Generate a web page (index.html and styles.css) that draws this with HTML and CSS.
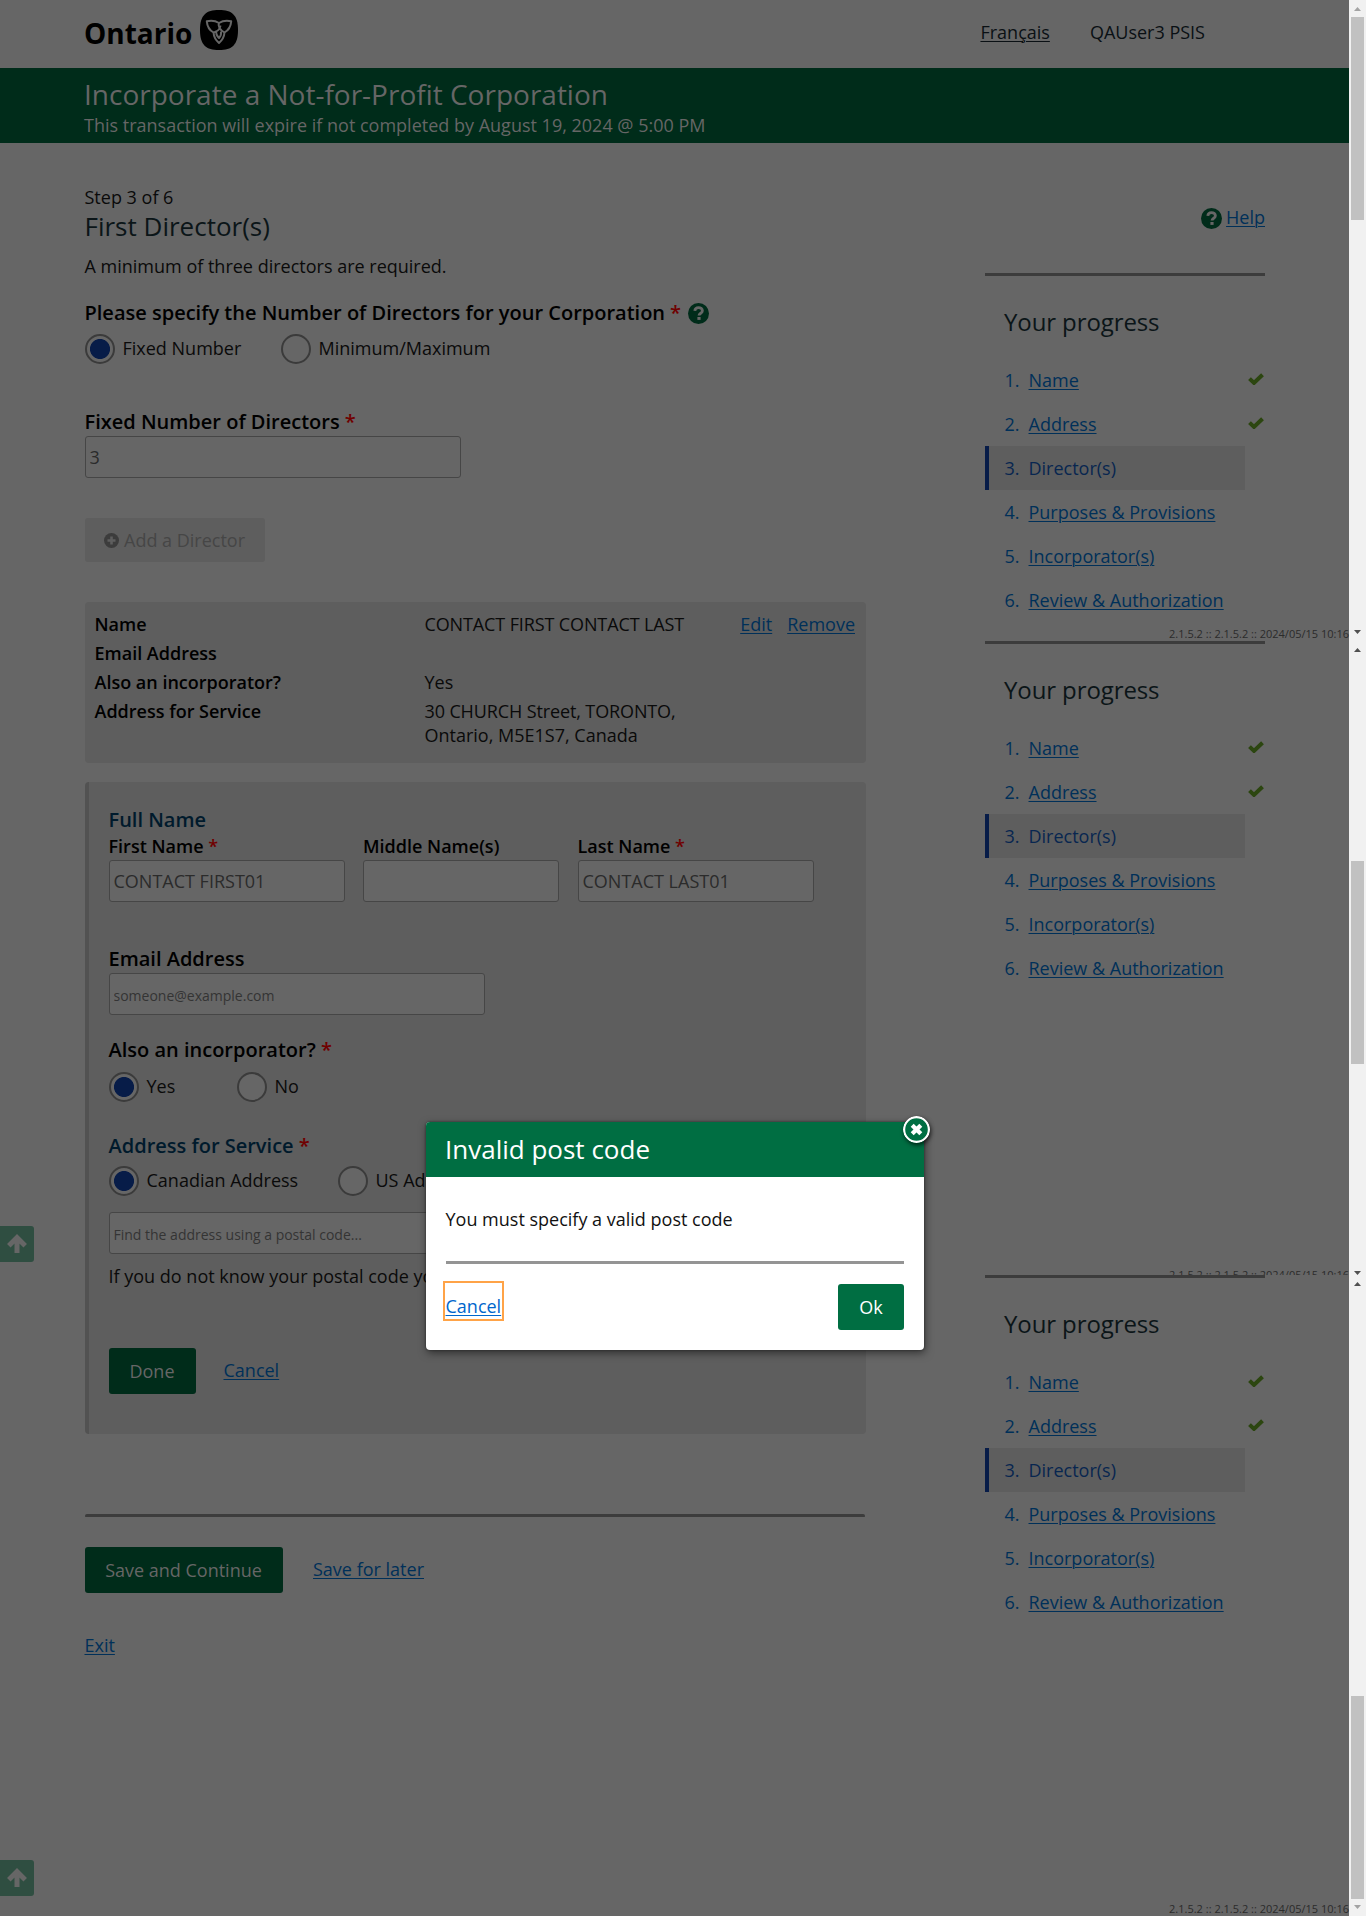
FILE: index.html
```html
<!DOCTYPE html>
<html lang="en">
<head>
<meta charset="utf-8">
<title>Incorporate a Not-for-Profit Corporation</title>
<link rel="stylesheet" href="styles.css">
</head>
<body>
<svg class="defs" width="0" height="0">
  <symbol id="help" viewBox="0 0 21 21"><circle cx="10.5" cy="10.5" r="10.5" fill="#002c1a"/><path d="M6.8 7.9C7 5.500 8.600 4.600 10.600 4.600s3.800 1.100 3.800 3.100c0 2.600-3.400 2.500-3.400 4.900" fill="none" stroke="#666" stroke-width="2.800"/><rect x="9.400" y="14" width="3.200" height="2.900" fill="#666"/></symbol>
  <symbol id="check" viewBox="0 0 16 12"><path d="M1.500 5.600 6 9.900 14.500 1.700" fill="none" stroke="#2c4610" stroke-width="4"/></symbol>
  <symbol id="up" viewBox="0 0 20 20"><path d="M10 19V4M1.800 11.800 10 3.600 18.200 11.800" fill="none" stroke="#666" stroke-width="5"/></symbol>
</svg>
<div class="app">
  <div class="page">
    <header class="header">
      <div class="logo"><span class="logo-text">Ontario</span>
        <svg class="badge" viewBox="0 0 38 40"><path d="M19 0C32 0 38 5 38 20S32 40 19 40 0 35 0 20 6 0 19 0Z" fill="#000"/><g fill="none" stroke="#666" stroke-width="2" stroke-linejoin="round"><path d="M19 13C15 10.500 11 10.300 6.800 11.300c.4 5 2.500 8.700 6.700 11.200.3 4 2 7.500 5.500 10.500 3.500-3 5.200-6.500 5.500-10.500 4.200-2.500 6.300-6.200 6.700-11.200-4.200-1-8.200-.8-12.200 1.700Z"/><path d="M13.500 22.500C17 22 20 19 20.500 15.500M19 13c-1.500 3 1 7 5.500 9.500M16.500 20.500c-1 3 .5 5.500 2.500 7.500 1.500-1.500 2.500-3.500 2-6.500"/></g></svg>
      </div>
      <nav class="topnav"><a class="lang" href="#">Français</a><span>QAUser3 PSIS</span></nav>
    </header>
    <div class="band"><h1>Incorporate a Not-for-Profit Corporation</h1><p>This transaction will expire if not completed by August 19, 2024 @ 5:00 PM</p></div>
    <div class="columns">
      <main class="main">
        <p class="step">Step 3 of 6</p>
        <h2>First Director(s)</h2>
        <p class="intro">A minimum of three directors are required.</p>
        <div class="label number-label">Please specify the Number of Directors for your Corporation <i>*</i><svg class="help-icon"><use href="#help"/></svg></div>
        <div class="radios first-radios"><span class="radio on"></span><label class="r-fixed">Fixed Number</label><span class="radio"></span><label>Minimum/Maximum</label></div>
        <div class="label fixed-label">Fixed Number of Directors <i>*</i></div>
        <input class="field wide" value="3">
        <button class="add" disabled><svg viewBox="0 0 15 15"><circle cx="7.500" cy="7.500" r="7.500" fill="#3c3c3c"/><path d="M7.500 3.500v8M3.500 7.500h8" stroke="#5e5e5e" stroke-width="2.600"/></svg>Add a Director</button>
        <section class="summary">
          <dl>
            <dt>Name</dt><dd class="caps">CONTACT FIRST CONTACT LAST</dd>
            <dt>Email Address</dt><dd></dd>
            <dt>Also an incorporator?</dt><dd>Yes</dd>
            <dt>Address for Service</dt><dd><span class="caps">30 CHURCH Street, TORONTO,</span><br>Ontario, M5E1S7, Canada</dd>
          </dl>
          <div class="row-actions"><a href="#">Edit</a><a href="#">Remove</a></div>
        </section>
        <section class="panel">
          <h3>Full Name</h3>
          <div class="names">
            <div><div class="small-label">First Name <i>*</i></div><input class="field" value="CONTACT FIRST01"></div>
            <div><div class="small-label">Middle Name(s)</div><input class="field"></div>
            <div><div class="small-label">Last Name <i>*</i></div><input class="field" value="CONTACT LAST01"></div>
          </div>
          <div class="label email-label">Email Address</div>
          <input class="field wide" placeholder="someone@example.com">
          <div class="label also-label">Also an incorporator? <i>*</i></div>
          <div class="radios also-radios"><span class="radio on"></span><label class="r-yes">Yes</label><span class="radio"></span><label>No</label></div>
          <h3 class="service">Address for Service <i>*</i></h3>
          <div class="radios service-radios"><span class="radio on"></span><label class="r-canada">Canadian Address</label><span class="radio"></span><label>US Address</label></div>
          <input class="field postal" placeholder="Find the address using a postal code...">
          <p class="hint">If you do not know your postal code you</p>
          <div class="actions panel-actions"><button class="btn done">Done</button><a href="#">Cancel</a></div>
        </section>
        <hr class="rule">
        <div class="actions page-actions"><button class="btn save">Save and Continue</button><a href="#">Save for later</a></div>
        <a class="exit" href="#">Exit</a>
      </main>
      <aside class="side">
        <div class="help"><svg class="help-icon"><use href="#help"/></svg><a href="#">Help</a></div>
        <section class="progress">
          <h4>Your progress</h4>
          <ol>
            <li><span>1.</span><a href="#">Name</a><svg class="check"><use href="#check"/></svg></li>
            <li><span>2.</span><a href="#">Address</a><svg class="check"><use href="#check"/></svg></li>
            <li class="current"><span>3.</span>Director(s)</li>
            <li><span>4.</span><a href="#">Purposes &amp; Provisions</a></li>
            <li><span>5.</span><a href="#">Incorporator(s)</a></li>
            <li><span>6.</span><a href="#">Review &amp; Authorization</a></li>
          </ol>
        </section>
        <section class="progress">
          <h4>Your progress</h4>
          <ol>
            <li><span>1.</span><a href="#">Name</a><svg class="check"><use href="#check"/></svg></li>
            <li><span>2.</span><a href="#">Address</a><svg class="check"><use href="#check"/></svg></li>
            <li class="current"><span>3.</span>Director(s)</li>
            <li><span>4.</span><a href="#">Purposes &amp; Provisions</a></li>
            <li><span>5.</span><a href="#">Incorporator(s)</a></li>
            <li><span>6.</span><a href="#">Review &amp; Authorization</a></li>
          </ol>
        </section>
        <section class="progress last">
          <h4>Your progress</h4>
          <ol>
            <li><span>1.</span><a href="#">Name</a><svg class="check"><use href="#check"/></svg></li>
            <li><span>2.</span><a href="#">Address</a><svg class="check"><use href="#check"/></svg></li>
            <li class="current"><span>3.</span>Director(s)</li>
            <li><span>4.</span><a href="#">Purposes &amp; Provisions</a></li>
            <li><span>5.</span><a href="#">Incorporator(s)</a></li>
            <li><span>6.</span><a href="#">Review &amp; Authorization</a></li>
          </ol>
        </section>
      </aside>
    </div>
    <div class="version v1">2.1.5.2 :: 2.1.5.2 :: 2024/05/15 10:16</div>
    <div class="version v2">2.1.5.2 :: 2.1.5.2 :: 2024/05/15 10:16</div>
    <div class="version v3">2.1.5.2 :: 2.1.5.2 :: 2024/05/15 10:16</div>
    <div class="to-top t1"><svg><use href="#up"/></svg></div>
    <div class="to-top t2"><svg><use href="#up"/></svg></div>
    <div class="modal">
      <div class="modal-head">Invalid post code</div>
      <div class="modal-body">
        <p>You must specify a valid post code</p>
        <div class="modal-foot"><a class="focused" href="#">Cancel</a><button class="ok">Ok</button></div>
      </div>
      <svg class="close" viewBox="0 0 27 27"><circle cx="13.500" cy="13.500" r="12.400" fill="#006e42" stroke="#fff" stroke-width="2.200"/><path d="m9.200 9.200 8.600 8.600m0-8.600-8.600 8.600" stroke="#fff" stroke-width="4.200"/></svg>
    </div>
  </div>
  <div class="bars">
    <div class="bar b1"><i class="tri up dim"></i><div class="thumb"></div><i class="tri down"></i></div>
    <div class="bar b2"><i class="tri up"></i><div class="thumb"></div><i class="tri down"></i></div>
    <div class="bar b3"><i class="tri up"></i><div class="thumb"></div><i class="tri down dim"></i></div>
  </div>
</div>
</body>
</html>
```
FILE: styles.css
```css
* { box-sizing: border-box; margin: 0; padding: 0; }
body { width: 1366px; height: 1916px; overflow: hidden; background: #666; color: #0a0a0a; font: 18px/24px "Open Sans", "Noto Sans", sans-serif; }
.defs { display: block; }
i { color: #700000; font-style: normal; }
a { color: #003059; text-decoration: underline; text-underline-offset: 2px; text-decoration-thickness: 1px; }
button, input { font: inherit; }
h1, h2, h3, h4 { font-weight: 400; }
.app { display: flex; height: 1916px; }
.page { position: relative; width: 1349px; height: 1916px; }

.header { display: flex; justify-content: space-between; height: 68px; padding: 10px 144px 0 84px; }
.logo { display: flex; gap: 8px; }
.logo-text { width: 108px; color: #000; font: 700 28px/40px "Open Sans", sans-serif; padding-top: 3px; }
.badge { width: 38px; height: 40px; }
.topnav { display: flex; gap: 40px; padding-top: 10px; color: #0a1014; }
.topnav .lang { color: #0a1014; }
.band { height: 75px; padding: 7px 0 0 84px; background: #002c1a; color: #666; }
.band h1 { font-size: 28px; line-height: 38px; }

.columns { display: flex; padding-left: 84.500px; }
.main { width: 781px; padding-top: 42px; }
.main h2 { font-size: 26px; line-height: 34px; color: #0b1518; }
.intro { margin-top: 11px; }
.label { font-size: 20px; line-height: 26px; font-weight: 600; color: #000; }
.number-label { display: flex; align-items: flex-start; gap: 5px; margin-top: 22px; }
.help-icon { width: 21px; height: 21px; }
.number-label .help-icon { margin: 3px 0 0 2px; }
.radios { display: flex; height: 30px; line-height: 28px; }
.first-radios { margin-top: 8px; }
.radio { width: 30px; height: 30px; margin-right: 8px; border: 2px solid #3b3b3b; border-radius: 50%; background: #666; }
.radio.on { background: radial-gradient(circle, #071c48 9.600px, #666 10.400px); }
.r-fixed { width: 158px; }
.fixed-label { margin-top: 45px; }
.field { display: block; width: 100%; height: 42px; border: 1px solid #464646; border-radius: 3px; background: #666; color: #2b2b2b; padding: 0 4px; outline: 0; }
.field.wide { width: 376px; }
.field::placeholder { color: #343434; font-size: 14px; opacity: 1; }
.fixed-label + .field { margin-top: 1px; }
.add { display: flex; align-items: center; gap: 5px; width: 180px; height: 44px; margin-top: 40px; padding-left: 19.500px; border: 0; border-radius: 3px; background: #5e5e5e; color: #464646; }
.add svg { width: 15px; height: 15px; }

.summary { display: flex; justify-content: space-between; height: 161px; margin-top: 40px; padding: 10px 10.500px 0 10px; border-radius: 4px; background: #5e5e5e; }
.summary dl { display: grid; grid-template-columns: 330px 280px; grid-template-rows: 24px 24px 24px 48px; row-gap: 5px; }
.summary dt { color: #000; font-weight: 600; }
.caps { letter-spacing: -.12px; }
.row-actions { display: flex; gap: 15px; height: 24px; }

.panel { height: 652px; margin-top: 19px; padding: 25px 20px 0; border-left: 4px solid #525252; border-radius: 4px; background: #5e5e5e; }
.panel h3 { font-size: 20px; line-height: 26px; font-weight: 600; color: #001a2c; }
.names { display: grid; grid-template-columns: 236px 196px 236px; column-gap: 18.500px; margin-top: 1px; }
.small-label { margin-bottom: 2px; font-weight: 600; color: #000; }
.email-label { margin: 44px 0 1px; }
.also-label { margin-top: 22px; }
.also-radios { margin-top: 9px; }
.r-yes { width: 90px; }
.panel .service { margin-top: 31px; }
.service-radios { margin-top: 7px; }
.r-canada { width: 191px; }
.postal { width: 496px; margin-top: 16px; }
.hint { margin-top: 10px; }
.actions { display: flex; height: 46px; align-items: flex-start; }
.actions a { margin-top: 10px; }
.btn { height: 46px; border: 0; border-radius: 3px; background: #002c1a; color: #666; }
.panel-actions { margin-top: 60px; gap: 28px; }
.done { width: 87px; }
.rule { width: 780px; height: 4px; margin-top: 80px; border: 0; border-top: 3px solid #3c3c3c; border-radius: 3px; }
.page-actions { margin-top: 29px; gap: 30.500px; }
.save { width: 198px; }
.exit { display: block; width: max-content; margin-top: 40px; }

.side { width: 280px; margin-left: 119.500px; padding-top: 62px; }
.help { display: flex; justify-content: flex-end; gap: 4px; height: 24px; margin-bottom: 44px; }
.help .help-icon { margin-top: 3px; }
.progress { height: 368px; padding-top: 29px; border-top: 3px solid #3c3c3c; }
.progress + .last { margin-top: 266px; }
.progress h4 { margin: 0 0 19px 19px; font-size: 24px; line-height: 34px; letter-spacing: -.1px; color: #0b1518; }
.progress ol { list-style: none; }
.progress li { display: flex; align-items: center; width: 280px; height: 44px; padding-left: 19.500px; color: #003059; }
.progress li span { width: 24px; }
.progress .current { width: 260px; padding-left: 15.500px; border-left: 4px solid #071c48; background: #5e5e5e; color: #082650; }
.check { width: 16px; height: 12px; margin: -2px 1.500px 0 auto; }

.version { position: absolute; right: 0; color: #2b2b2b; font-size: 11px; line-height: 16px; white-space: nowrap; }
.v1 { top: 626px; }
.v2 { top: 1267px; height: 8px; overflow: hidden; }
.v3 { top: 1901px; height: 15px; overflow: hidden; }
.to-top { position: absolute; left: 0; width: 34px; height: 36px; padding: 8px 7px; border-radius: 0 3px 3px 0; background: #2f4e41; }
.to-top svg { display: block; width: 20px; height: 20px; }
.t1 { top: 1226px; }
.t2 { top: 1860px; }

.modal { position: absolute; left: 426px; top: 1122px; width: 498px; height: 228px; border-radius: 4px; background: #fff; color: #111; box-shadow: 0 0 2px #222, 1px 3px 8px rgba(0,0,0,.5); }
.modal-head { height: 55px; padding: 9px 19px; border-radius: 4px 4px 0 0; background: #006e42; color: #fff; font-size: 26px; line-height: 36px; }
.modal-body { padding: 30px 20px 0; }
.modal-body p { height: 57px; border-bottom: 3px solid #949494; text-indent: -.5px; }
.modal-foot { display: flex; justify-content: space-between; align-items: flex-start; padding-top: 17px; }
.focused { width: 61px; height: 40px; margin-left: -3px; padding: 11px .5px 0; border: 2px solid #ffa347; line-height: 24px; color: #06c; }
.ok { width: 66px; height: 46px; margin-top: 3px; border: 0; border-radius: 3px; background: #006e42; color: #fff; }
.close { position: absolute; left: 477px; top: -6px; width: 27px; height: 27px; border-radius: 50%; box-shadow: 1px 2px 4px rgba(0,0,0,.7); }

.bars { width: 17px; background: #f1f1f1; }
.bar { display: flex; flex-direction: column; align-items: center; padding: 7px 0; }
.b1 { height: 641px; }
.b2 { height: 634px; }
.b3 { height: 641px; }
.tri { width: 7px; height: 4px; background: #505050; }
.tri.dim { background: #a3a3a3; }
.tri.up { clip-path: polygon(50% 0, 100% 100%, 0 100%); }
.tri.down { margin-top: auto; clip-path: polygon(0 0, 100% 0, 50% 100%); }
.thumb { width: 13px; height: 203px; background: #c1c1c1; }
.b1 .thumb { margin-top: 6px; }
.b2 .thumb { margin-top: 209px; }
.b2 { padding-bottom: 0; }
.b3 .thumb { margin-top: 410px; }
```
